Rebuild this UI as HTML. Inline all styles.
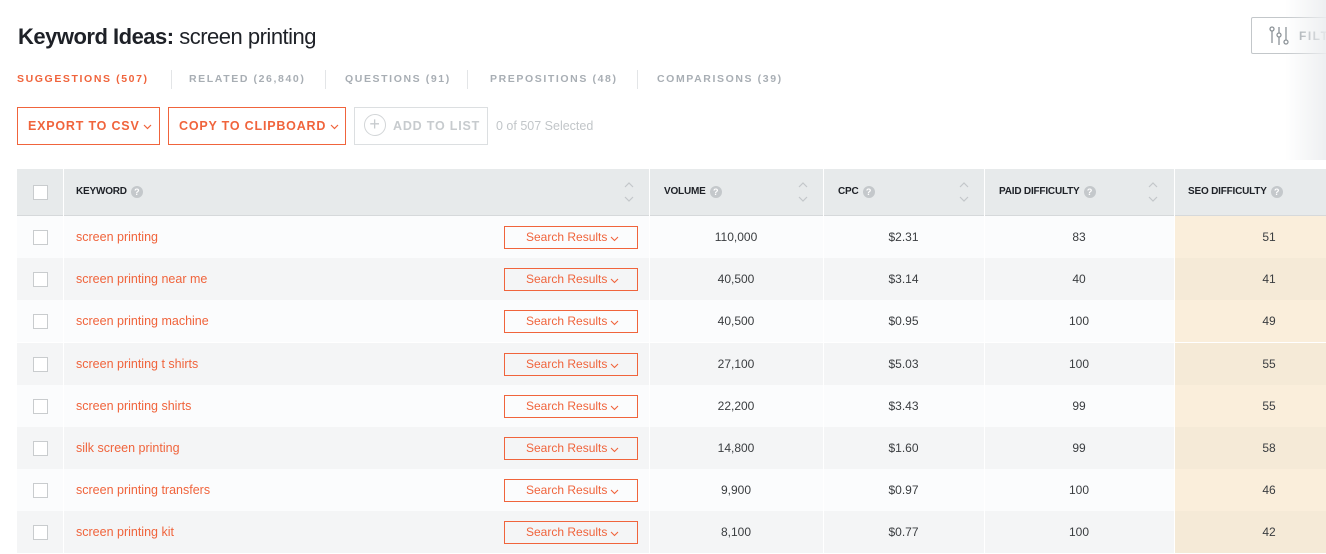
<!DOCTYPE html>
<html><head><meta charset="utf-8"><style>
*{box-sizing:border-box;margin:0;padding:0}
body{width:1326px;height:554px;overflow:hidden;background:#fff;font-family:"Liberation Sans",sans-serif;position:relative;color:#333}
.abs{position:absolute}
h1{position:absolute;left:18px;top:24px;font-size:22px;font-weight:bold;color:#1e2127;letter-spacing:-0.5px}
h1 span{font-weight:normal}
.tabs{position:absolute;top:73px;left:17px;font-size:10.5px;font-weight:bold;letter-spacing:1.6px;color:#a8aeb4;white-space:nowrap}
.tab{position:absolute;top:0}
.sep{position:absolute;top:70px;width:1px;height:19px;background:#e3e5e7}
.btn{position:absolute;top:107px;height:38px;border:1px solid #f0643c;color:#f0643c;font-size:12.5px;font-weight:bold;letter-spacing:0.8px;line-height:36px;padding-left:10px;white-space:nowrap}
.btn svg{position:absolute;top:16px}
.hdr{position:absolute;top:169px;left:17px;width:1309px;height:47px;background:#e7eaeb;border-bottom:1px solid #d6d9db}
.row{position:absolute;left:17px;width:1309px;height:42px}
.vl{position:absolute;top:169px;width:1px;height:385px;background:#fff}
.cb{position:absolute;left:16px;width:15px;height:15px;border:1px solid #c9ccce;background:#fff}
.th{position:absolute;top:17px;font-size:10px;font-weight:bold;color:#1e2127;letter-spacing:-0.2px}
.q{display:inline-block;width:12px;height:12px;border-radius:50%;background:#c4c8cb;color:#fff;font-size:9px;text-align:center;line-height:12px;margin-left:4px;vertical-align:-1px}
.arr{position:absolute;top:12px}
.cell{position:absolute;top:0;line-height:42px;font-size:12px;color:#3a3d40;text-align:center}
.kw{position:absolute;left:59px;line-height:42px;font-size:12.5px;color:#f0643c}
.sr{position:absolute;left:487px;top:10px;width:134px;height:23px;border:1px solid #f0643c;color:#f0643c;font-size:12px;line-height:21px;padding-left:21px;white-space:nowrap}
.sr svg{position:absolute;left:105px;top:9px}
</style></head><body>
<h1>Keyword Ideas: <span>screen printing</span></h1>
<div class="tabs">
<span class="tab" style="left:0;color:#f0643c">SUGGESTIONS (507)</span>
<span class="tab" style="left:172px">RELATED (26,840)</span>
<span class="tab" style="left:328px">QUESTIONS (91)</span>
<span class="tab" style="left:473px">PREPOSITIONS (48)</span>
<span class="tab" style="left:640px">COMPARISONS (39)</span>
</div>
<div class="sep" style="left:171px"></div><div class="sep" style="left:325px"></div><div class="sep" style="left:467px"></div><div class="sep" style="left:637px"></div>
<div class="btn" style="left:17px;width:143px">EXPORT TO CSV<svg style="left:125px" width="9" height="6" viewBox="0 0 9 6" fill="none" stroke="#f0643c" stroke-width="1.2"><path d="M1 1l3.5 3.5L8 1"/></svg></div>
<div class="btn" style="left:168px;width:178px">COPY TO CLIPBOARD<svg style="left:161px" width="9" height="6" viewBox="0 0 9 6" fill="none" stroke="#f0643c" stroke-width="1.2"><path d="M1 1l3.5 3.5L8 1"/></svg></div>
<div class="btn" style="left:354px;width:134px;border-color:#dcdfe1;color:#c7cbce;padding-left:9px"><span style="display:inline-block;width:22px;height:22px;border:1.5px solid #d3d6d8;border-radius:50%;text-align:center;line-height:18px;font-size:18px;font-weight:normal;vertical-align:middle;margin-right:7px;position:relative;top:-2px">+</span>ADD TO LIST</div>
<div class="abs" style="left:496px;top:119px;font-size:12.5px;color:#c2c6c9">0 of 507 Selected</div>
<div class="abs" style="left:1251px;top:17px;width:90px;height:37px;border:1px solid #c3c7ca;border-radius:2px">
<svg class="abs" style="left:17px;top:8px" width="22" height="20" viewBox="0 0 22 20" fill="none" stroke="#8b9297" stroke-width="1.3"><circle cx="3" cy="3" r="2"/><line x1="3" y1="5" x2="3" y2="17"/><line x1="10" y1="1" x2="10" y2="7"/><circle cx="10" cy="9" r="2"/><line x1="10" y1="11" x2="10" y2="19"/><line x1="17" y1="1" x2="17" y2="14"/><circle cx="17" cy="16" r="2"/></svg>
<span class="abs" style="left:47px;top:11px;font-size:12px;font-weight:bold;letter-spacing:1.5px;color:#9aa1a6">FILTERS</span></div>
<div class="abs" style="left:1285px;top:0;width:41px;height:160px;background:linear-gradient(to right,rgba(255,255,255,0),rgba(236,238,240,0.9))"></div>

<div class="hdr">
<div class="cb" style="top:16px"></div>
<div class="th" style="left:59px">KEYWORD<span class="q">?</span></div>
<svg class="arr" style="left:606px" width="12" height="22" viewBox="0 0 12 22" fill="none" stroke="#c3c7ca" stroke-width="1.2"><path d="M2 6l4-4 4 4M2 16l4 4 4-4"/></svg>
<div class="th" style="left:647px">VOLUME<span class="q">?</span></div>
<svg class="arr" style="left:780px" width="12" height="22" viewBox="0 0 12 22" fill="none" stroke="#c3c7ca" stroke-width="1.2"><path d="M2 6l4-4 4 4M2 16l4 4 4-4"/></svg>
<div class="th" style="left:821px">CPC<span class="q">?</span></div>
<svg class="arr" style="left:941px" width="12" height="22" viewBox="0 0 12 22" fill="none" stroke="#c3c7ca" stroke-width="1.2"><path d="M2 6l4-4 4 4M2 16l4 4 4-4"/></svg>
<div class="th" style="left:982px">PAID DIFFICULTY<span class="q">?</span></div>
<svg class="arr" style="left:1130px" width="12" height="22" viewBox="0 0 12 22" fill="none" stroke="#c3c7ca" stroke-width="1.2"><path d="M2 6l4-4 4 4M2 16l4 4 4-4"/></svg>
<div class="th" style="left:1171px">SEO DIFFICULTY<span class="q">?</span></div>
</div>

<div id="rows"></div>
<script>
var d=[["screen printing","110,000","$2.31","83","51"],["screen printing near me","40,500","$3.14","40","41"],["screen printing machine","40,500","$0.95","100","49"],["screen printing t shirts","27,100","$5.03","100","55"],["screen printing shirts","22,200","$3.43","99","55"],["silk screen printing","14,800","$1.60","99","58"],["screen printing transfers","9,900","$0.97","100","46"],["screen printing kit","8,100","$0.77","100","42"]];
var h="";
d.forEach(function(r,i){var top=216+i*42.2;var bg=i%2?"#f4f5f6":"#fbfcfd";var seo=i%2?"#f5ead7":"#faeedb";
h+='<div class="row" style="top:'+top+'px;background:'+bg+'"><div class="cb" style="top:14px"></div><div class="kw">'+r[0]+'</div><div class="sr">Search Results<svg width="9" height="6" viewBox="0 0 9 6" fill="none" stroke="#f0643c" stroke-width="1.1"><path d="M1 1l3.5 3.5L8 1"/></svg></div>'+
'<div class="cell" style="left:632px;width:174px">'+r[1]+'</div><div class="cell" style="left:806px;width:161px">'+r[2]+'</div><div class="cell" style="left:967px;width:190px">'+r[3]+'</div><div class="cell" style="left:1157px;width:190px;height:42px;background:'+seo+'">'+r[4]+'</div></div>';});
document.getElementById("rows").innerHTML=h;
</script>
<div class="vl" style="left:63px"></div><div class="vl" style="left:649px"></div><div class="vl" style="left:823px"></div><div class="vl" style="left:984px"></div><div class="vl" style="left:1174px"></div>
</body></html>
